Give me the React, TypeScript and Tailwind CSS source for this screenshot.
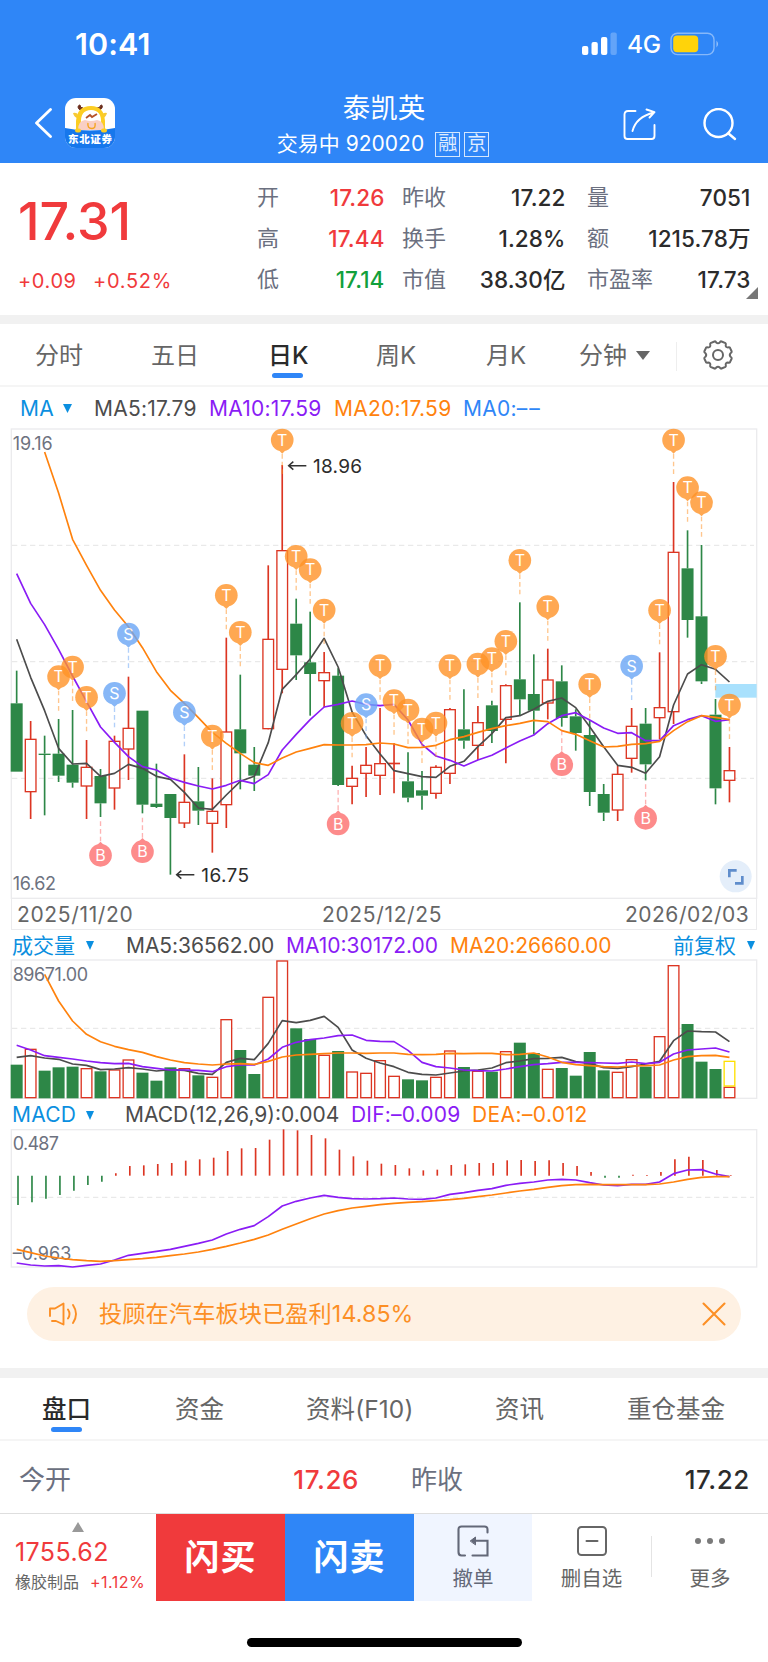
import { ReactNode } from 'react';

type Candle = ['r' | 'g', number, number, number, number];
type Marker = [number, number, 'T' | 'S' | 'B'];

// The charts share one horizontal scale, in thirds of a pixel
const xAt = (i: number) => 50 + 41.93 * i;

// color, high, body top, body bottom, low
const candles: Candle[] = [
  ['g', 752, 850, 1055, 1055], ['r', 903, 958, 1115, 1197], ['g', 947, 1001, 1005, 1186], ['g', 897, 1001, 1067, 1086],
  ['g', 870, 1034, 1088, 1103], ['r', 960, 1042, 1098, 1197], ['g', 1047, 1068, 1150, 1191], ['r', 947, 964, 1104, 1169],
  ['r', 770, 925, 987, 1080], ['g', 872, 872, 1154, 1180], ['g', 1031, 1151, 1161, 1164], ['g', 1122, 1122, 1194, 1364],
  ['r', 1003, 1147, 1209, 1224], ['g', 1041, 1144, 1172, 1215], ['r', 1075, 1174, 1210, 1298], ['r', 653, 936, 1154, 1224],
  ['g', 764, 928, 1000, 1108], ['g', 981, 1034, 1067, 1113], ['r', 436, 658, 926, 928], ['r', 135, 392, 748, 820],
  ['g', 536, 611, 706, 780], ['g', 575, 727, 762, 887], ['r', 696, 758, 782, 862], ['g', 745, 767, 1095, 1098],
  ['r', 1037, 1075, 1099, 1153], ['r', 981, 1036, 1060, 1131], ['r', 864, 1031, 1066, 1125], ['r', 970, 1030, 1031, 1120],
  ['g', 997, 1084, 1133, 1147], ['g', 1053, 1111, 1127, 1169], ['r', 1036, 1042, 1120, 1136], ['r', 864, 869, 1060, 1092],
  ['g', 808, 928, 962, 986], ['r', 858, 908, 976, 1020], ['g', 842, 856, 933, 969], ['r', 793, 797, 898, 1030],
  ['g', 547, 778, 838, 886], ['g', 703, 822, 872, 943], ['r', 686, 780, 849, 898], ['g', 736, 784, 894, 920],
  ['g', 868, 889, 939, 992], ['g', 900, 945, 1116, 1158], ['g', 1092, 1122, 1178, 1203], ['r', 1036, 1063, 1170, 1203],
  ['r', 864, 919, 1015, 1058], ['g', 864, 911, 1033, 1081], ['r', 697, 863, 893, 958], ['r', 186, 397, 875, 912],
  ['g', 331, 445, 600, 653], ['g', 375, 589, 784, 792], ['g', 837, 884, 1105, 1153], ['r', 981, 1052, 1081, 1147],
];

const ma5 = [658, 772, 872, 985, 1032, 1030, 1069, 1060, 1033, 1045, 1069, 1078, 1117, 1164, 1168, 1125, 1084, 1069, 968, 808, 764, 717, 655, 741, 876, 947, 1002, 1052, 1061, 1070, 1072, 1039, 1024, 980, 941, 893, 887, 868, 844, 834, 863, 920, 980, 1036, 1042, 1060, 1010, 855, 762, 734, 748, 786];
const ma10 = [461, 550, 614, 688, 768, 845, 921, 967, 1010, 1040, 1050, 1074, 1087, 1098, 1107, 1096, 1081, 1091, 1064, 990, 943, 899, 861, 853, 843, 853, 857, 853, 900, 973, 1008, 1021, 1038, 1020, 1006, 984, 963, 945, 911, 887, 878, 900, 924, 940, 938, 962, 962, 917, 899, 887, 904, 899];
const ma20 = [96, 219, 358, 436, 511, 570, 620, 683, 755, 811, 850, 893, 937, 970, 1000, 1028, 1036, 1014, 996, 985, 974, 975, 975, 974, 969, 972, 983, 982, 976, 959, 950, 937, 926, 917, 910, 901, 905, 932, 943, 962, 981, 979, 973, 971, 964, 932, 905, 887, 892, 899];

const markers: Marker[] = [
  [3, 770, 'T'], [4, 741, 'T'], [5, 832, 'T'], [7, 820, 'S'], [8, 642, 'S'], [12, 877, 'S'], [14, 948, 'T'], [15, 526, 'T'],
  [16, 637, 'T'], [19, 60, 'T'], [20, 409, 'T'], [21, 449, 'T'], [22, 570, 'T'], [24, 910, 'T'], [25, 854, 'S'], [26, 737, 'T'],
  [27, 842, 'T'], [28, 870, 'T'], [29, 927, 'T'], [30, 909, 'T'], [31, 737, 'T'], [33, 732, 'T'], [34, 716, 'T'], [35, 664, 'T'],
  [36, 421, 'T'], [38, 560, 'T'], [41, 793, 'T'], [44, 738, 'S'], [46, 571, 'T'], [47, 60, 'T'], [48, 203, 'T'], [49, 248, 'T'],
  [50, 709, 'T'], [51, 855, 'T'], [6, 1306, 'B'], [9, 1295, 'B'], [23, 1212, 'B'], [39, 1034, 'B'], [45, 1195, 'B'],
];

const volumes = [524, 478, 542, 532, 530, 536, 544, 540, 510, 548, 572, 532, 536, 556, 562, 389, 480, 552, 322, 213, 415, 447, 496, 483, 546, 550, 512, 559, 568, 571, 562, 483, 531, 544, 545, 485, 458, 489, 538, 534, 557, 486, 541, 547, 509, 530, 440, 227, 402, 515, 537, 592];
const vol5 = [502, 497, 504, 508, 522, 526, 539, 537, 533, 537, 543, 539, 541, 550, 553, 517, 505, 509, 460, 392, 398, 391, 379, 412, 480, 505, 519, 530, 547, 553, 555, 549, 543, 540, 534, 518, 513, 506, 505, 502, 515, 520, 533, 535, 530, 522, 514, 452, 423, 425, 426, 455];
const vol10 = [466, 480, 497, 502, 507, 513, 518, 521, 520, 530, 535, 540, 540, 541, 545, 530, 525, 525, 507, 472, 457, 449, 444, 437, 435, 451, 454, 455, 481, 517, 530, 534, 540, 542, 543, 537, 530, 524, 521, 517, 517, 518, 519, 520, 516, 521, 517, 492, 480, 477, 474, 486];
const vol20 = [253, 333, 393, 433, 455, 469, 479, 487, 500, 510, 518, 522, 525, 522, 521, 523, 514, 501, 495, 493, 491, 489, 489, 490, 489, 489, 493, 494, 493, 490, 491, 490, 490, 494, 493, 489, 501, 517, 524, 527, 530, 531, 528, 527, 525, 510, 500, 497, 496, 502];

const macd = [945, 937, 926, 915, 902, 885, 875, 850, 828, 826, 822, 819, 812, 808, 803, 783, 775, 774, 749, 718, 721, 735, 745, 779, 799, 812, 821, 825, 835, 841, 839, 825, 823, 819, 819, 811, 810, 813, 811, 819, 828, 846, 863, 863, 854, 855, 846, 808, 800, 810, 840, 855];
const dif = [1119, 1125, 1128, 1127, 1131, 1126, 1122, 1110, 1096, 1090, 1084, 1078, 1069, 1060, 1050, 1032, 1018, 1007, 980, 948, 934, 924, 916, 922, 926, 927, 926, 924, 927, 928, 924, 913, 908, 901, 896, 886, 880, 876, 870, 868, 870, 878, 885, 887, 883, 883, 876, 851, 840, 839, 852, 860];
const dea = [1078, 1088, 1098, 1104, 1109, 1112, 1114, 1112, 1109, 1106, 1102, 1097, 1092, 1086, 1078, 1069, 1059, 1048, 1035, 1018, 1002, 986, 972, 962, 954, 949, 944, 940, 937, 935, 932, 929, 925, 920, 915, 909, 903, 898, 892, 887, 884, 883, 884, 884, 884, 884, 882, 876, 868, 862, 860, 860];

const RED = '#dc3522';
const GREEN = '#2d8747';
const markerColors = { T: '#ff9327', S: '#6aa6f6', B: '#fd6f6f' };

function Line({ data, color, start = 0 }: { data: number[]; color: string; start?: number }) {
  const points = data.map((y, i) => `${xAt(i + start)},${y}`).join(' ');
  return <polyline points={points} fill="none" stroke={color} strokeWidth={5} strokeLinejoin="round" />;
}

function Frame({ top, bottom, grid }: { top: number; bottom: number; grid: number[] }) {
  return (
    <>
      <rect x={34} y={top} width={2236} height={bottom - top} fill="none" stroke="#ebebed" strokeWidth={4} />
      {grid.map(y => (
        <line key={y} x1={36} x2={2262} y1={y} y2={y} stroke="#e9e9e9" strokeWidth={4} strokeDasharray="16 11" />
      ))}
    </>
  );
}

function PriceChart() {
  return (
    <svg viewBox="0 24 2304 1413" className="block h-[471px] w-[768px]">
      <Frame top={27} bottom={1435} grid={[376, 725, 1075]} />
      <rect x={2146} y={792} width={124} height={41} fill="#a9e1fd" />
      {candles.map(([c, high, top, bottom, low], i) => {
        const x = xAt(i);
        const color = c === 'r' ? RED : GREEN;
        return (
          <g key={i} stroke={color} strokeWidth={5}>
            {high < top && <line x1={x} x2={x} y1={high} y2={top} />}
            {low > bottom && <line x1={x} x2={x} y1={bottom} y2={low} />}
            {c === 'g' ? (
              <rect x={x - 18} y={top} width={36} height={bottom - top} fill={color} stroke="none" />
            ) : (
              <rect x={x - 16} y={top} width={32} height={bottom - top} fill="#fff" strokeWidth={4} />
            )}
          </g>
        );
      })}
      <Line data={ma5} color="#4c4c4c" />
      <Line data={ma10} color="#8a1cf5" />
      <Line data={ma20} color="#ff820d" start={2} />
      {markers.map(([i, y, kind]) => {
        const x = xAt(i);
        const dir = kind === 'B' ? -1 : 1;
        const color = markerColors[kind];
        return (
          <g key={i} opacity={0.8}>
            <line x1={x} x2={x} y1={y + dir * 42} y2={y + dir * 107} stroke={color} strokeOpacity={0.65} strokeWidth={4} strokeDasharray="14 9" />
            <path d={`M${x - 10} ${y + dir * 31}H${x + 10}L${x} ${y + dir * 41}Z`} fill={color} />
            <circle cx={x} cy={y} r={34} fill={color} />
            <text x={x} y={y + 17} textAnchor="middle" fontSize={48} fill="#fff">{kind}</text>
          </g>
        );
      })}
      <g fill="#6d7280" fontSize={54}>
        <text x={38} y={89} textLength={120}>19.16</text>
        <text x={38} y={1411} textLength={130}>16.62</text>
      </g>
      <g fill="#2c2c2c" fontSize={57}>
        <text x={939} y={158} textLength={147}>18.96</text>
        <text x={604} y={1385} textLength={143}>16.75</text>
      </g>
      <path d="M919 137H866M880 125L866 137L880 149M583 1364H530M544 1352L530 1364L544 1376" fill="none" stroke="#333" strokeWidth={4.5} />
      <circle cx={2207} cy={1369} r={48} fill="#e4eefa" />
      <path d="M2188 1372V1351H2210M2227 1368V1390H2205" fill="none" stroke="#5f8dcc" strokeWidth={8} />
    </svg>
  );
}

function VolumeChart() {
  return (
    <svg viewBox="0 207 2304 420" className="block h-[140px] w-[768px]">
      <Frame top={210} bottom={625} grid={[415]} />
      {volumes.map((y, i) => {
        const x = xAt(i);
        return candles[i][0] === 'g' ? (
          <rect key={i} x={x - 18} y={y} width={36} height={625 - y} fill={GREEN} />
        ) : (
          <rect key={i} x={x - 16} y={y} width={32} height={623 - y} fill="#fff" stroke={RED} strokeWidth={4} />
        );
      })}
      <rect x={xAt(51) - 16} y={514} width={32} height={74} fill="#fff" stroke="#ffe000" strokeWidth={4} />
      <text x={38} y={273} fontSize={54} fill="#6d7280" textLength={226}>89671.00</text>
      <Line data={vol5} color="#4c4c4c" />
      <Line data={vol10} color="#8a1cf5" />
      <Line data={vol20} color="#ff820d" start={2} />
    </svg>
  );
}

function MacdChart() {
  return (
    <svg viewBox="0 717 2304 417" className="block h-[139px] w-[768px]">
      <Frame top={719} bottom={1131} grid={[922]} />
      {macd.map((y, i) => (
        <line key={i} x1={xAt(i) + 4} x2={xAt(i) + 4} y1={857} y2={y} stroke={y > 857 ? GREEN : RED} strokeWidth={5} />
      ))}
      <g fill="#6d7280" fontSize={54}>
        <text x={38} y={781} textLength={139}>0.487</text>
        <text x={38} y={1109} textLength={176}>–0.963</text>
      </g>
      <Line data={dif} color="#8a1cf5" />
      <Line data={dea} color="#ff820d" />
    </svg>
  );
}

function DownArrow({ className }: { className: string }) {
  return (
    <svg viewBox="0 0 10 10" preserveAspectRatio="none" className={className}>
      <path d="M0 0H10L5 10Z" fill="currentColor" />
    </svg>
  );
}

function Logo() {
  return (
    <svg viewBox="0 0 50 50" className="ml-[12px] h-[50px] w-[50px]">
      <defs>
        <clipPath id="logo-clip">
          <rect width="50" height="50" rx="11" />
        </clipPath>
      </defs>
      <g clipPath="url(#logo-clip)">
        <rect width="50" height="50" fill="#fff" />
        <path d="M15 12C12 10 13 7 15 7Q15 10 18 10ZM35 12C38 10 38 7 36 7Q35 10 32 10Z" fill="#6b2d1c" stroke="#6b2d1c" />
        <path d="M8 15Q12 14 13 17L12 20Q9 19 8 15ZM42 15Q38 14 37 17L38 20Q41 19 42 15Z" fill="#f7c936" />
        <path d="M11 32V23Q12 8 26 8Q39 8 40 23V32Z" fill="#fccd22" />
        <path d="M16 26Q15 12 26 12Q37 12 36 26Z" fill="#fff" />
        <path d="M21 20L25 17L27 19L32 16" fill="none" stroke="#b5532a" strokeWidth="1.8" />
        <path d="M13 32Q13 23 20 22Q26 24 32 22Q39 23 39 32Z" fill="#f9cfc4" />
        <path d="M0 30Q25 35 50 30V50H0Z" fill="#1677ec" />
        <path d="M23 25Q22 30.5 27 30.5Q31 30.5 30 25" fill="none" stroke="#f5a51f" strokeWidth="1.4" />
        <rect x="10" y="30.5" width="6" height="4" rx="2" fill="#fccd22" />
        <rect x="36" y="30.5" width="6" height="4" rx="2" fill="#fccd22" />
        <text x="3" y="44.5" fontSize="10.5" fontWeight="900" fill="#fff" textLength="44">东北证券</text>
      </g>
    </svg>
  );
}

function Header() {
  return (
    <header className="h-[163px] bg-[#2f86f7] text-white">
      <div className="flex h-[87px] items-center justify-between pl-[75px] pr-[48px]">
        <span className="text-[30.5px] font-semibold tracking-[0.1px]">10:41</span>
        <div className="flex items-center">
          <svg viewBox="0 0 36 24" className="h-[24px] w-[36px]" fill="#fff">
            <rect x="0" y="14" width="6.3" height="9" rx="2" />
            <rect x="9.5" y="10" width="6.3" height="13" rx="2" />
            <rect x="19" y="5" width="6.3" height="18" rx="2" />
            <rect x="28.5" y="0.5" width="6.3" height="22.5" rx="2" opacity="0.25" />
          </svg>
          <span className="ml-[9px] w-[43px] pt-[2px] text-[24.5px] font-medium tracking-[-0.4px]">4G</span>
          <svg viewBox="0 0 50 24" className="h-[24px] w-[50px]">
            <rect x="1" y="1.2" width="43" height="21.4" rx="6.5" fill="none" stroke="#fff" strokeOpacity="0.42" strokeWidth="1.4" />
            <rect x="3.2" y="3.5" width="25" height="16.8" rx="4" fill="#ffd30a" />
            <path d="M46.5 8.5Q49.5 12 46.5 15.5Z" fill="#fff" fillOpacity="0.5" />
          </svg>
        </div>
      </div>
      <div className="flex h-[76px] items-center pl-[34px]">
        <svg viewBox="0 0 19 30" className="-mt-1 h-[30px] w-[19px]" fill="none" stroke="#fff" strokeWidth="2.8" strokeLinecap="round" strokeLinejoin="round">
          <path d="M16.5 1.5L2.5 15L16.5 28.5" />
        </svg>
        <div className="-mt-1">
          <Logo />
        </div>
        <div className="-mt-[4px] flex w-[538px] flex-col items-center">
          <div className="text-[27.5px] leading-[38px]">泰凯英</div>
          <div className="-mb-[2px] flex items-center pt-[2px] pr-[2px] text-[21px] leading-[30px]">
            <span>交易中 920020</span>
            <span className="ml-[11px] flex h-[25px] w-[25px] items-center justify-center border border-white/80 text-[19px] text-white/85">融</span>
            <span className="ml-[4px] flex h-[25px] w-[25px] items-center justify-center border border-white/80 text-[19px] text-white/85">京</span>
          </div>
        </div>
        <svg viewBox="0 0 34 34" className="-ml-[30px] h-[34px] w-[34px]" fill="none" stroke="#fff" strokeWidth="1.9" strokeLinecap="round" strokeLinejoin="round">
          <path d="M12.5 3H5Q1.5 3 1.5 6.5V28Q1.5 31 4.5 31H28.5Q31.5 31 31.5 28V17" />
          <path d="M9.5 23Q13 9 31 4.5M23.5 1.5L31.5 4.2L26.5 9.5" />
        </svg>
        <svg viewBox="0 0 34 34" className="ml-[46px] h-[34px] w-[34px]" fill="none" stroke="#fff" strokeWidth="2.4" strokeLinecap="round">
          <circle cx="15.5" cy="15" r="14" />
          <path d="M25.5 25.5L32 31" />
        </svg>
      </div>
    </header>
  );
}

const quoteColumns = [
  { className: 'ml-[257px] w-[127px]', rows: [['开', '17.26', 'text-[#f03a3c]'], ['高', '17.44', 'text-[#f03a3c]'], ['低', '17.14', 'text-[#12a03c]']] },
  { className: 'ml-[18px] w-[163px]', rows: [['昨收', '17.22', 'text-[#2b2b2b]'], ['换手', '1.28%', 'text-[#2b2b2b]'], ['市值', '38.30亿', 'text-[#2b2b2b]']] },
  { className: 'ml-[22px] w-[163px]', rows: [['量', '7051', 'text-[#2b2b2b]'], ['额', '1215.78万', 'text-[#2b2b2b]'], ['市盈率', '17.73', 'text-[#2b2b2b]']] },
];

function Quote() {
  return (
    <section className="relative flex h-[152px] pt-[14px]">
      <div className="-mr-[257px] w-[257px] pl-[18px] text-[#f03a3c]">
        <div className="mt-[13px] text-[52px] font-medium leading-[64px] tracking-[-0.1px]">17.31</div>
        <div className="mt-[11px] flex text-[20px] leading-[32px]">
          <span className="w-[75px] tracking-[0.6px]">+0.09</span>
          <span className="tracking-[0.7px]">+0.52%</span>
        </div>
      </div>
      {quoteColumns.map((col, i) => (
        <div key={i} className={col.className}>
          {col.rows.map(([label, value, color]) => (
            <div key={label} className="flex h-[41px] items-center justify-between">
              <span className="text-[22px] text-[#6b7080]">{label}</span>
              <span className={`-mr-[0.5px] text-[22.5px] font-medium tracking-[0.1px] ${color}`}>{value}</span>
            </div>
          ))}
        </div>
      ))}
      <svg viewBox="0 0 12 12" className="absolute right-[10px] bottom-[16px] h-[12px] w-[12px]">
        <path d="M12 0V12H0Z" fill="#777" />
      </svg>
    </section>
  );
}

function PeriodTabs() {
  return (
    <nav className="flex h-[63px] items-center border-b-2 border-[#f5f5f5] pt-[3px] pl-[35px] text-[24px] text-[#666]">
      <span className="w-[116px]">分时</span>
      <span className="w-[117px]">五日</span>
      <span className="relative w-[108px] font-medium text-[#2a2a2a]">
        日K
        <i className="absolute -bottom-[4px] left-[4px] h-[5px] w-[31px] rounded-full bg-[#2f86f7]" />
      </span>
      <span className="w-[110px]">周K</span>
      <span className="w-[93px]">月K</span>
      <span className="w-[57px]">分钟</span>
      <DownArrow className="mb-[2px] h-[9px] w-[14px]" />
      <i className="ml-[26px] h-[29px] w-px bg-[#eee]" />
      <svg viewBox="-16 -16 32 32" className="mb-[2px] ml-[25px] h-[32px] w-[32px]" fill="none" stroke="#666" strokeWidth="2" strokeLinejoin="round">
        <circle r="5" />
        <path d="M-3.5 -13.5Q-2.8 -14 -1.8 -12.6Q0 -11 1.8 -12.6Q2.8 -14 3.5 -13.5L7.5 -11.8Q8.2 -11.2 7.7 -9.7Q7.6 -7.6 9.8 -7.6Q11.6 -8 12 -7.2L13.7 -3.5Q14 -2.8 12.6 -1.8Q11 0 12.6 1.8Q14 2.8 13.7 3.5L12 7.2Q11.6 8 9.8 7.6Q7.6 7.6 7.7 9.7Q8.2 11.2 7.5 11.8L3.5 13.5Q2.8 14 1.8 12.6Q0 11 -1.8 12.6Q-2.8 14 -3.5 13.5L-7.5 11.8Q-8.2 11.2 -7.7 9.7Q-7.6 7.6 -9.8 7.6Q-11.6 8 -12 7.2L-13.7 3.5Q-14 2.8 -12.6 1.8Q-11 0 -12.6 -1.8Q-14 -2.8 -13.7 -3.5L-12 -7.2Q-11.6 -8 -9.8 -7.6Q-7.6 -7.6 -7.7 -9.7Q-8.2 -11.2 -7.5 -11.8Z" />
      </svg>
    </nav>
  );
}

function Charts() {
  return (
    <section className="text-[21px]">
      <div className="flex h-[41px] items-center pt-[2px] pl-[20px] tracking-[0.25px]">
        <span className="w-[43px] text-[#0b8fe0]">MA</span>
        <DownArrow className="h-[9px] w-[9px] text-[#0b8fe0]" />
        <span className="ml-[22px] w-[115px] text-[#4c4c4c]">MA5:17.79</span>
        <span className="w-[125px] text-[#8a1cf5]">MA10:17.59</span>
        <span className="w-[129px] text-[#ff820d]">MA20:17.59</span>
        <span className="text-[#2f86f7]">MA0:<span className="tracking-[2px]">––</span></span>
      </div>
      <PriceChart />
      <div className="mx-[11px] flex h-[31px] items-center border-x border-b border-[#ebebed] pt-[2px] pl-[5px] tracking-[0.65px] text-[#666]">
        <span className="w-[305px]">2025/11/20</span>
        <span className="w-[303px]">2025/12/25</span>
        <span className="tracking-[0.5px]">2026/02/03</span>
      </div>
      <div className="flex h-[29px] items-center pt-[2px] pl-[12px]">
        <span className="w-[74px] text-[#0b8fe0]">成交量</span>
        <DownArrow className="h-[9px] w-[8px] text-[#0b8fe0]" />
        <span className="ml-[32px] w-[160px] tracking-[-0.05px] text-[#4c4c4c]">MA5:36562.00</span>
        <span className="w-[164px] text-[#8a1cf5]">MA10:30172.00</span>
        <span className="w-[223px] tracking-[-0.05px] text-[#ff820d]">MA20:26660.00</span>
        <span className="w-[74px] text-[#0b8fe0]">前复权</span>
        <DownArrow className="h-[9px] w-[8px] text-[#0b8fe0]" />
      </div>
      <VolumeChart />
      <div className="flex h-[30px] items-center pt-[2px] pl-[12px]">
        <span className="w-[74px] tracking-[0.2px] text-[#0b8fe0]">MACD</span>
        <DownArrow className="h-[9px] w-[8px] text-[#0b8fe0]" />
        <span className="ml-[31px] w-[226px] text-[#4c4c4c]">MACD(12,26,9):0.004</span>
        <span className="w-[121px] tracking-[0.2px] text-[#8a1cf5]">DIF:–0.009</span>
        <span className="tracking-[0.4px] text-[#ff820d]">DEA:–0.012</span>
      </div>
      <MacdChart />
    </section>
  );
}

function Notice() {
  return (
    <div className="mx-[27px] mt-[19px] mb-[27px] flex h-[54px] items-center rounded-full bg-[#fef1e3] pl-[21px] pr-[15px] text-[#fc8f25]">
      <svg viewBox="0 0 30 26" className="h-[26px] w-[30px]" fill="none" stroke="currentColor" strokeWidth="1.9" strokeLinecap="round" strokeLinejoin="round">
        <path d="M2 15V7.5H7L15.5 2.5V23.5L8 20H4" />
        <path d="M20 8.5Q23 13 20 17.5M25 4Q31 13 25 22" />
      </svg>
      <span className="ml-[21px] flex-1 pt-px text-[23.2px] tracking-[0.1px]">投顾在汽车板块已盈利14.85%</span>
      <svg viewBox="0 0 24 24" className="h-[24px] w-[24px]" fill="none" stroke="currentColor" strokeWidth="2.1" strokeLinecap="round">
        <path d="M1.5 1.5L22.5 22.5M22.5 1.5L1.5 22.5" />
      </svg>
    </div>
  );
}

function DetailTabs() {
  return (
    <nav className="flex h-[63px] items-center border-b-2 border-[#f5f5f5] pt-[2px] pl-[42px] text-[24.5px] text-[#666]">
      <span className="relative w-[133px] font-medium text-[#2a2a2a]">
        盘口
        <i className="absolute -bottom-[4px] left-[9px] h-[5px] w-[31px] rounded-full bg-[#2f86f7]" />
      </span>
      <span className="w-[131px]">资金</span>
      <span className="w-[189px] tracking-[0.1px]">资料(F10)</span>
      <span className="w-[132px]">资讯</span>
      <span>重仓基金</span>
    </nav>
  );
}

function BarItem({ icon, label, className }: { icon: ReactNode; label: string; className: string }) {
  return (
    <div className={`flex flex-col items-center pt-[10px] text-[20.5px] leading-[28px] ${className}`}>
      <div className="flex h-[34px] items-center">{icon}</div>
      <span className="mt-[7px]">{label}</span>
    </div>
  );
}

function BottomBar() {
  return (
    <footer className="flex h-[87px]">
      <div className="flex w-[156px] flex-col pl-[15px] text-[#f03a3c]">
        <svg viewBox="0 0 12 10" className="mt-[8px] ml-[57px] h-[10px] w-[12px]">
          <path d="M6 0L12 10H0Z" fill="#999" />
        </svg>
        <span className="mt-[4px] text-[25px] leading-[32px] tracking-[0.4px]">1755.62</span>
        <div className="mt-[2px] flex text-[16px] leading-[24px]">
          <span className="w-[75px] text-[#666]">橡胶制品</span>
          <span className="tracking-[0.5px]">+1.12%</span>
        </div>
      </div>
      <button className="w-[129px] bg-[#f03a3c] text-[35px] font-bold tracking-[1px] text-white">闪买</button>
      <button className="w-[129px] bg-[#2f86f7] text-[35px] font-bold tracking-[1px] text-white">闪卖</button>
      <BarItem
        className="w-[118px] bg-[#f0f5ff] text-[#636878]"
        label="撤单"
        icon={
          <svg viewBox="0 0 32 32" className="h-[32px] w-[32px]" fill="none" stroke="#636878" strokeWidth="2.1" strokeLinecap="round">
            <path d="M30.5 7.5V4.5Q30.5 1.5 27.5 1.5H4.5Q1.5 1.5 1.5 4.5V27Q1.5 30.5 4.5 30.5H8" />
            <path d="M16 15.8H30.5V30.5H15.5" />
            <path d="M13.5 15.8L18.5 12V19.5Z" fill="#636878" strokeWidth="1" />
          </svg>
        }
      />
      <BarItem
        className="w-[119px] text-[#666]"
        label="删自选"
        icon={
          <svg viewBox="0 0 30 30" className="h-[30px] w-[30px]" fill="none" stroke="#666" strokeWidth="2" strokeLinecap="round">
            <rect x="1" y="1" width="28" height="28" rx="3.5" />
            <path d="M9.5 15H20.5" />
          </svg>
        }
      />
      <i className="mt-[22px] h-[41px] w-px bg-[#e4e4e4]" />
      <BarItem
        className="flex-1 text-[#666]"
        label="更多"
        icon={
          <svg viewBox="0 0 30 8" className="h-[8px] w-[30px]" fill="#7a7a7a">
            <circle cx="3" cy="4" r="3" />
            <circle cx="15" cy="4" r="3" />
            <circle cx="27" cy="4" r="3" />
          </svg>
        }
      />
    </footer>
  );
}

export default function App() {
  return (
    <div className="h-[1662px] w-[768px] overflow-hidden whitespace-nowrap bg-white font-['Inter','Noto_Sans_CJK_SC',sans-serif]">
      <Header />
      <Quote />
      <div className="h-[9px] bg-[#f1f1f1]" />
      <PeriodTabs />
      <Charts />
      <Notice />
      <div className="h-[10px] bg-[#f1f1f1]" />
      <DetailTabs />
      <div className="flex h-[73px] items-center border-b border-[#dedede] pt-[5px] pl-[19px] pr-[18px] text-[26px]">
        <span className="text-[#6b7080]">今开</span>
        <span className="flex-1 pr-[52px] text-right font-medium tracking-[0.6px] text-[#f03a3c]">17.26</span>
        <span className="w-[204px] text-[#6b7080]">昨收</span>
        <span className="w-[135px] text-right font-medium tracking-[0.6px] text-[#2b2b2b]">17.22</span>
      </div>
      <BottomBar />
      <div className="mx-auto mt-[37px] h-[9px] w-[275px] rounded-full bg-black" />
    </div>
  );
}
